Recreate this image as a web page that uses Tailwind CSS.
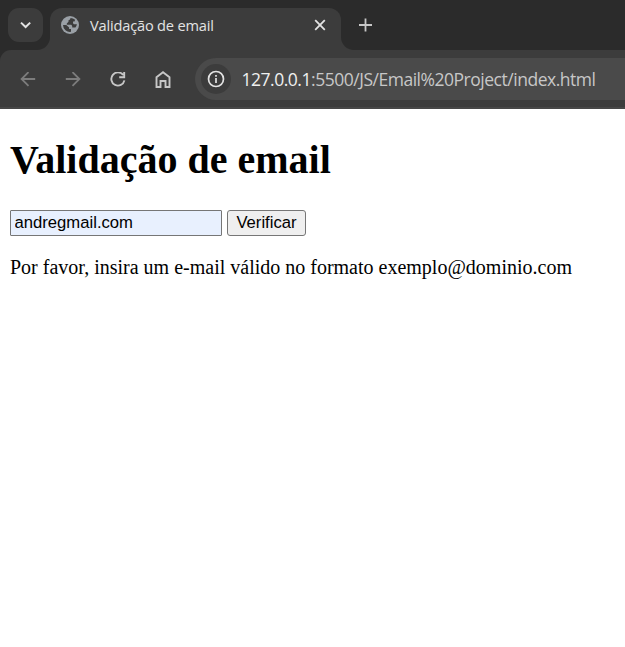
<!DOCTYPE html>
<html lang="pt-BR">
<head>
<meta charset="utf-8">
<title>Validação de email</title>
<script src="https://cdn.jsdelivr.net/npm/@tailwindcss/browser@4"></script>
</head>
<body class="h-[647px] w-[625px] overflow-hidden bg-white text-black">
<header class="h-[109px] w-full bg-[#2b2b2b] font-['Open_Sans',sans-serif]">
  <div class="flex h-[50px] items-end pl-2">
    <button class="mb-2 flex h-[34px] w-[35px] items-center justify-center rounded-[11px] bg-[#3c3c3c]" aria-label="Pesquisar guias">
      <svg class="size-[12px]" viewBox="0 0 12 12" fill="none" stroke="#e3e3e3" stroke-width="2"><path d="M1 3.600 5.600 8l4.600-4.400"/></svg>
    </button>
    <div class="relative ml-[7px] flex h-[42px] w-[290.5px] items-center rounded-t-[12px] bg-[#3c3c3c] pb-2 pl-[10px] pr-[13.5px]">
      <svg class="absolute bottom-0 -left-[13px] size-[13px]" viewBox="0 0 13 13" fill="#3c3c3c"><path d="M13 0v13H0A13 13 0 0 0 13 0z"/></svg>
      <svg class="absolute bottom-0 -right-[13px] size-[13px]" viewBox="0 0 13 13" fill="#3c3c3c"><path d="M0 0v13h13A13 13 0 0 1 0 0z"/></svg>
      <svg class="size-5" viewBox="0 0 20 20"><circle cx="10" cy="10" r="9" fill="#9aa0a6"/><path fill="#3c3c3c" d="M10.500 3c-.2 1.400-.8 2-2 2.300v1.500L6.800 8.500v1.300h3.700c1 0 1.700.6 1.700 1.500v1.200h3.200a7 7 0 0 0 1.500-3.300h-2.300c-1.100 0-1.600-.6-1.600-1.500V6.500h1.500l.6-1.800A7 7 0 0 0 10.500 3zM3 10h3.300l2.800 2.500v1.400h1.900v2.900A7 7 0 0 1 3 10z"/></svg>
      <span class="ml-[10px] whitespace-nowrap text-[14.6px] leading-5 tracking-[-0.18px] text-[#e3e3e3]">Validação de email</span>
      <svg class="ml-auto size-[14px]" viewBox="0 0 14 14" fill="none" stroke="#e3e3e3" stroke-width="1.8"><path d="m2.200 2.200 9.600 9.600m0-9.600-9.600 9.600"/></svg>
    </div>
    <svg class="mb-[18px] ml-[17.5px] size-[14px]" viewBox="0 0 14 14" fill="none" stroke="#c7c7c7" stroke-width="1.8"><path d="M7.500.5v13M1 7h13"/></svg>
  </div>
  <div class="flex h-[59px] items-center rounded-tl-[11px] bg-[#3c3c3c] pl-[19.5px] shadow-[inset_0_-2px_0_#474747]">
    <svg class="size-4" viewBox="0 0 16 16" fill="none" stroke="#7c7c7c" stroke-width="1.8"><path d="M15.200 7H1.500M8.500.1 1.600 7l6.900 6.900"/></svg>
    <svg class="ml-[29px] size-4" viewBox="0 0 16 16" fill="none" stroke="#7c7c7c" stroke-width="1.8"><path d="M.8 7h13.700M7.500.1l6.900 6.900-6.900 6.900"/></svg>
    <svg class="ml-[29px] size-4" viewBox="0 0 16 16" fill="none" stroke="#c7c7c7" stroke-width="1.900"><path d="M14.400 8.400A6.600 6.600 0 1 1 13.200 3M14.200 0v5.200H9.200"/></svg>
    <svg class="ml-[29px] h-[18px] w-4" viewBox="0 0 16 18" fill="none" stroke="#c7c7c7" stroke-width="1.900"><path d="M1.500 16V6.200L8 1.300l6.500 4.900V16h-4v-6h-5v6z"/></svg>
    <div class="mb-px ml-[24.5px] flex h-[42px] flex-1 items-center rounded-l-full bg-[#4a4a4a] pl-[6px]">
      <span class="flex size-[30px] items-center justify-center rounded-full bg-[#3c3c3c]">
        <svg class="size-[18px]" viewBox="0 0 18 18" fill="none" stroke="#e3e3e3" stroke-width="1.700"><circle cx="9" cy="9" r="7.500"/><path d="M9 8v5M9 5v1.700"/></svg>
      </span>
      <span class="ml-[10.5px] whitespace-nowrap text-[17.500px] leading-6 tracking-[-0.48px] text-[#c7c7c7]"><span class="text-[#f0f0f0]">127.0.0.1</span>:5500/JS/Email%20Project/index.html</span>
    </div>
  </div>
</header>
<main class="px-[10px] pt-[28px] font-['Liberation_Serif',serif]">
  <h1 class="text-[40px] font-bold leading-[46px]">Validação de email</h1>
  <form class="mt-[27px] flex gap-[5px] font-['Liberation_Sans',sans-serif] text-[16.667px]">
    <input class="h-[26px] w-[212px] rounded-[1px] border border-[#767676] bg-[#e8f0fe] px-[3.5px] leading-5" type="text" value="andregmail.com" aria-label="Email">
    <button class="h-[26px] w-[79px] rounded-[3px] border border-[#767676] bg-[#efefef] leading-5" type="button">Verificar</button>
  </form>
  <p class="mt-5 whitespace-nowrap text-[20px] leading-[23px]">Por favor, insira um e-mail válido no formato exemplo@dominio.com</p>
</main>
</body>
</html>
